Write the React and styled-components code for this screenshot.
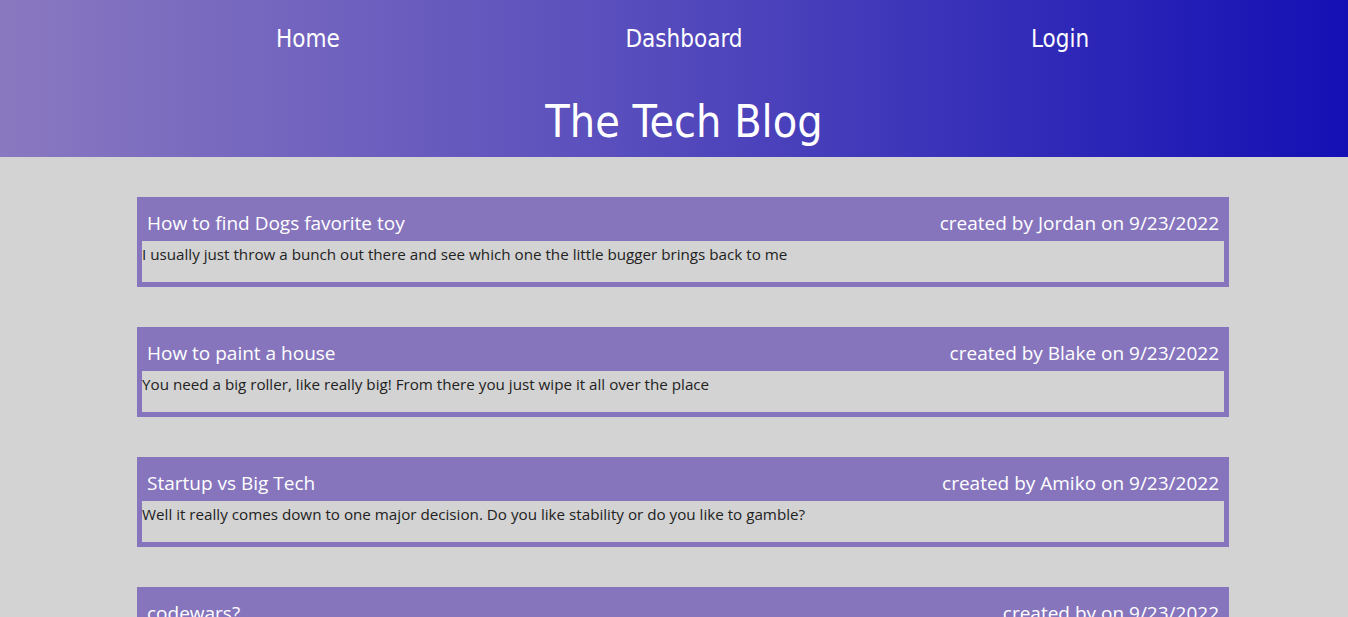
import React from "react";
import styled, { createGlobalStyle } from "styled-components";

const Global = createGlobalStyle`
  html, body { margin: 0; padding: 0; background: #d3d3d3; }
  body { font-family: "Open Sans", "Noto Sans", sans-serif; }
`;

const Header = styled.header`
  height: 157px;
  box-sizing: border-box;
  padding-left: 20px;
  background: linear-gradient(90deg, #8a78c0 0%, #5a4fbd 45%, #1410b4 100%);
  color: #fff;
  font-family: "DejaVu Sans Condensed", "Noto Sans", sans-serif;
  display: flex;
  flex-direction: column;
  align-items: center;
`;

const Nav = styled.nav`
  width: 1128px;
  display: grid;
  grid-template-columns: repeat(3, 1fr);
  padding-top: 23px;
  height: 36px;
`;

const NavLink = styled.a`
  text-align: center;
  color: #fff;
  text-decoration: none;
  font-size: 24px;
  line-height: 32px;
`;

const Title = styled.h1`
  margin: 0;
  margin-top: 34px;
  font-weight: 400;
  font-size: 44.5px;
  line-height: 58px;
`;

const Main = styled.main`
  padding: 40px 0 0 137px;
  display: flex;
  flex-direction: column;
  gap: 40px;
`;

const Card = styled.article`
  width: 1092px;
  box-sizing: border-box;
  background: #8675bd;
  padding: 0 5px 5px;
`;

const CardHead = styled.div`
  display: flex;
  justify-content: space-between;
  align-items: center;
  height: 44px;
  padding: 7px 5px 0;
  box-sizing: border-box;
  color: #fff;
  font-size: 19px;
`;

const CardBody = styled.div`
  background: #d3d3d3;
  height: 41px;
  color: #222;
  font-size: 15.2px;
  line-height: 26px;
`;

const posts = [
  { title: "How to find Dogs favorite toy", author: "Jordan", body: "I usually just throw a bunch out there and see which one the little bugger brings back to me" },
  { title: "How to paint a house", author: "Blake", body: "You need a big roller, like really big! From there you just wipe it all over the place" },
  { title: "Startup vs Big Tech", author: "Amiko", body: "Well it really comes down to one major decision. Do you like stability or do you like to gamble?" },
  { title: "codewars?", author: "", body: "" },
];

export default function App() {
  return (
    <>
      <Global />
      <Header>
        <Nav>
          <NavLink href="#">Home</NavLink>
          <NavLink href="#">Dashboard</NavLink>
          <NavLink href="#">Login</NavLink>
        </Nav>
        <Title>The Tech Blog</Title>
      </Header>
      <Main>
        {posts.map((p, i) => (
          <Card key={i}>
            <CardHead>
              <span>{p.title}</span>
              <span>created by {p.author ? p.author + " " : ""}on 9/23/2022</span>
            </CardHead>
            <CardBody>{p.body}</CardBody>
          </Card>
        ))}
      </Main>
    </>
  );
}
